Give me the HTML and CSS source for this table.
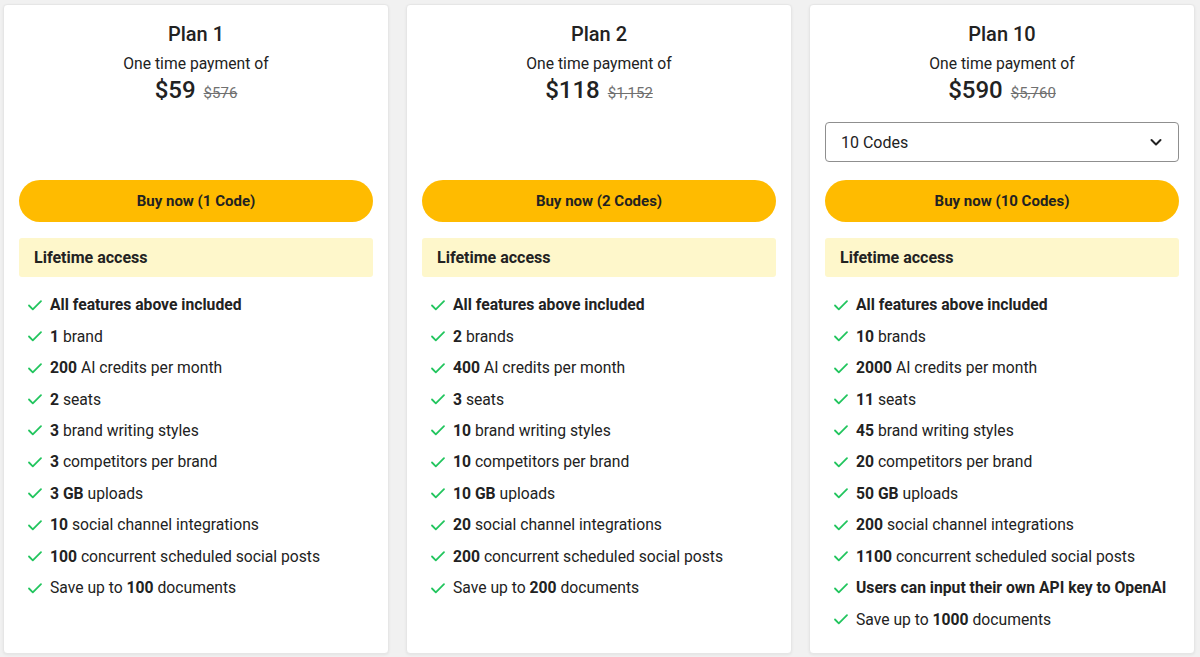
FILE: index.html
```html
<!DOCTYPE html>
<html lang="en">
<head>
<meta charset="utf-8">
<title>Plans</title>
<link rel="stylesheet" href="styles.css">
</head>
<body>
<main class="plans">
  <section class="card">
    <h2 class="title">Plan 1</h2>
    <p class="sub">One time payment of</p>
    <p class="price"><span class="now">$59</span><s class="was">$576</s></p>
    <div class="select-slot"></div>
    <button class="buy">Buy now (1 Code)</button>
    <div class="lifetime">Lifetime access</div>
    <ul class="features">
      <li><svg class="chk" viewBox="0 0 16 16"><path d="M2 8.5l3.8 3.8L14 4.2"/></svg><span><b>All features above included</b></span></li>
      <li><svg class="chk" viewBox="0 0 16 16"><path d="M2 8.5l3.8 3.8L14 4.2"/></svg><span><b>1</b> brand</span></li>
      <li><svg class="chk" viewBox="0 0 16 16"><path d="M2 8.5l3.8 3.8L14 4.2"/></svg><span><b>200</b> AI credits per month</span></li>
      <li><svg class="chk" viewBox="0 0 16 16"><path d="M2 8.5l3.8 3.8L14 4.2"/></svg><span><b>2</b> seats</span></li>
      <li><svg class="chk" viewBox="0 0 16 16"><path d="M2 8.5l3.8 3.8L14 4.2"/></svg><span><b>3</b> brand writing styles</span></li>
      <li><svg class="chk" viewBox="0 0 16 16"><path d="M2 8.5l3.8 3.8L14 4.2"/></svg><span><b>3</b> competitors per brand</span></li>
      <li><svg class="chk" viewBox="0 0 16 16"><path d="M2 8.5l3.8 3.8L14 4.2"/></svg><span><b>3 GB</b> uploads</span></li>
      <li><svg class="chk" viewBox="0 0 16 16"><path d="M2 8.5l3.8 3.8L14 4.2"/></svg><span><b>10</b> social channel integrations</span></li>
      <li><svg class="chk" viewBox="0 0 16 16"><path d="M2 8.5l3.8 3.8L14 4.2"/></svg><span><b>100</b> concurrent scheduled social posts</span></li>
      <li><svg class="chk" viewBox="0 0 16 16"><path d="M2 8.5l3.8 3.8L14 4.2"/></svg><span>Save up to <b>100</b> documents</span></li>
    </ul>
  </section>

  <section class="card">
    <h2 class="title">Plan 2</h2>
    <p class="sub">One time payment of</p>
    <p class="price"><span class="now">$118</span><s class="was">$1,152</s></p>
    <div class="select-slot"></div>
    <button class="buy">Buy now (2 Codes)</button>
    <div class="lifetime">Lifetime access</div>
    <ul class="features">
      <li><svg class="chk" viewBox="0 0 16 16"><path d="M2 8.5l3.8 3.8L14 4.2"/></svg><span><b>All features above included</b></span></li>
      <li><svg class="chk" viewBox="0 0 16 16"><path d="M2 8.5l3.8 3.8L14 4.2"/></svg><span><b>2</b> brands</span></li>
      <li><svg class="chk" viewBox="0 0 16 16"><path d="M2 8.5l3.8 3.8L14 4.2"/></svg><span><b>400</b> AI credits per month</span></li>
      <li><svg class="chk" viewBox="0 0 16 16"><path d="M2 8.5l3.8 3.8L14 4.2"/></svg><span><b>3</b> seats</span></li>
      <li><svg class="chk" viewBox="0 0 16 16"><path d="M2 8.5l3.8 3.8L14 4.2"/></svg><span><b>10</b> brand writing styles</span></li>
      <li><svg class="chk" viewBox="0 0 16 16"><path d="M2 8.5l3.8 3.8L14 4.2"/></svg><span><b>10</b> competitors per brand</span></li>
      <li><svg class="chk" viewBox="0 0 16 16"><path d="M2 8.5l3.8 3.8L14 4.2"/></svg><span><b>10 GB</b> uploads</span></li>
      <li><svg class="chk" viewBox="0 0 16 16"><path d="M2 8.5l3.8 3.8L14 4.2"/></svg><span><b>20</b> social channel integrations</span></li>
      <li><svg class="chk" viewBox="0 0 16 16"><path d="M2 8.5l3.8 3.8L14 4.2"/></svg><span><b>200</b> concurrent scheduled social posts</span></li>
      <li><svg class="chk" viewBox="0 0 16 16"><path d="M2 8.5l3.8 3.8L14 4.2"/></svg><span>Save up to <b>200</b> documents</span></li>
    </ul>
  </section>

  <section class="card">
    <h2 class="title">Plan 10</h2>
    <p class="sub">One time payment of</p>
    <p class="price"><span class="now">$590</span><s class="was">$5,760</s></p>
    <div class="select-slot">
      <div class="select"><span>10 Codes</span><svg class="chev" viewBox="0 0 16 16"><path d="M3.5 6l4.5 4.5L12.5 6"/></svg></div>
    </div>
    <button class="buy">Buy now (10 Codes)</button>
    <div class="lifetime">Lifetime access</div>
    <ul class="features">
      <li><svg class="chk" viewBox="0 0 16 16"><path d="M2 8.5l3.8 3.8L14 4.2"/></svg><span><b>All features above included</b></span></li>
      <li><svg class="chk" viewBox="0 0 16 16"><path d="M2 8.5l3.8 3.8L14 4.2"/></svg><span><b>10</b> brands</span></li>
      <li><svg class="chk" viewBox="0 0 16 16"><path d="M2 8.5l3.8 3.8L14 4.2"/></svg><span><b>2000</b> AI credits per month</span></li>
      <li><svg class="chk" viewBox="0 0 16 16"><path d="M2 8.5l3.8 3.8L14 4.2"/></svg><span><b>11</b> seats</span></li>
      <li><svg class="chk" viewBox="0 0 16 16"><path d="M2 8.5l3.8 3.8L14 4.2"/></svg><span><b>45</b> brand writing styles</span></li>
      <li><svg class="chk" viewBox="0 0 16 16"><path d="M2 8.5l3.8 3.8L14 4.2"/></svg><span><b>20</b> competitors per brand</span></li>
      <li><svg class="chk" viewBox="0 0 16 16"><path d="M2 8.5l3.8 3.8L14 4.2"/></svg><span><b>50 GB</b> uploads</span></li>
      <li><svg class="chk" viewBox="0 0 16 16"><path d="M2 8.5l3.8 3.8L14 4.2"/></svg><span><b>200</b> social channel integrations</span></li>
      <li><svg class="chk" viewBox="0 0 16 16"><path d="M2 8.5l3.8 3.8L14 4.2"/></svg><span><b>1100</b> concurrent scheduled social posts</span></li>
      <li><svg class="chk" viewBox="0 0 16 16"><path d="M2 8.5l3.8 3.8L14 4.2"/></svg><span><b>Users can input their own API key to OpenAI</b></span></li>
      <li><svg class="chk" viewBox="0 0 16 16"><path d="M2 8.5l3.8 3.8L14 4.2"/></svg><span>Save up to <b>1000</b> documents</span></li>
    </ul>
  </section>
</main>
</body>
</html>
```
FILE: styles.css
```css
* { box-sizing: border-box; }
html, body { margin: 0; height: 100%; }
body {
  background: #f1f1f1;
  font-family: Roboto, "Liberation Sans", Arial, sans-serif;
  color: #222;
  overflow: hidden;
}
.plans {
  display: grid;
  grid-template-columns: repeat(3, 386px);
  column-gap: 17px;
  padding: 4px 0 0 3px;
  height: 654px;
}
.card {
  background: #fff;
  border: 1px solid #e6e6e6;
  border-radius: 4px;
  box-shadow: 0 1px 3px rgba(0,0,0,0.06);
  padding: 15px 15px 0 15px;
  display: flex;
  flex-direction: column;
}
.title {
  margin: 0;
  font-size: 20px;
  font-weight: 500;
  line-height: 28px;
  text-align: center;
}
.sub {
  margin: 4px 0 0;
  font-size: 15.7px;
  line-height: 24px;
  text-align: center;
}
.price {
  margin: 0;
  line-height: 28px;
  text-align: center;
}
.now { font-size: 24px; font-weight: 500; }
.was {
  font-size: 15px;
  color: #707070;
  margin-left: 8px;
}
.select-slot {
  height: 40px;
  margin-top: 15px;
}
.select {
  height: 40px;
  border: 1px solid #8f8f8f;
  border-radius: 4px;
  display: flex;
  align-items: center;
  justify-content: space-between;
  padding: 0 14px 0 15px;
  font-size: 16px;
}
.chev {
  width: 16px; height: 16px;
  fill: none; stroke: #222; stroke-width: 2;
  stroke-linecap: round; stroke-linejoin: round;
}
.buy {
  margin-top: 18px;
  height: 42px;
  border: 0;
  border-radius: 21px;
  background: #ffbb00;
  color: #222;
  font-family: inherit;
  font-size: 15px;
  font-weight: 700;
  cursor: pointer;
}
.lifetime {
  margin-top: 16px;
  height: 39px;
  background: #fef7cb;
  border-radius: 3px;
  padding: 0 15px;
  display: flex;
  align-items: center;
  font-size: 16px;
  font-weight: 700;
}
.features {
  list-style: none;
  margin: 12px 0 0;
  padding: 0 0 0 8px;
}
.features li {
  display: flex;
  align-items: center;
  height: 31.45px;
  font-size: 15.7px;
}
.features b { font-weight: 700; }
.chk {
  width: 16px; height: 16px;
  margin-right: 7px;
  fill: none; stroke: #22c55e; stroke-width: 1.8;
  stroke-linecap: round; stroke-linejoin: round;
  flex: none;
}
```
